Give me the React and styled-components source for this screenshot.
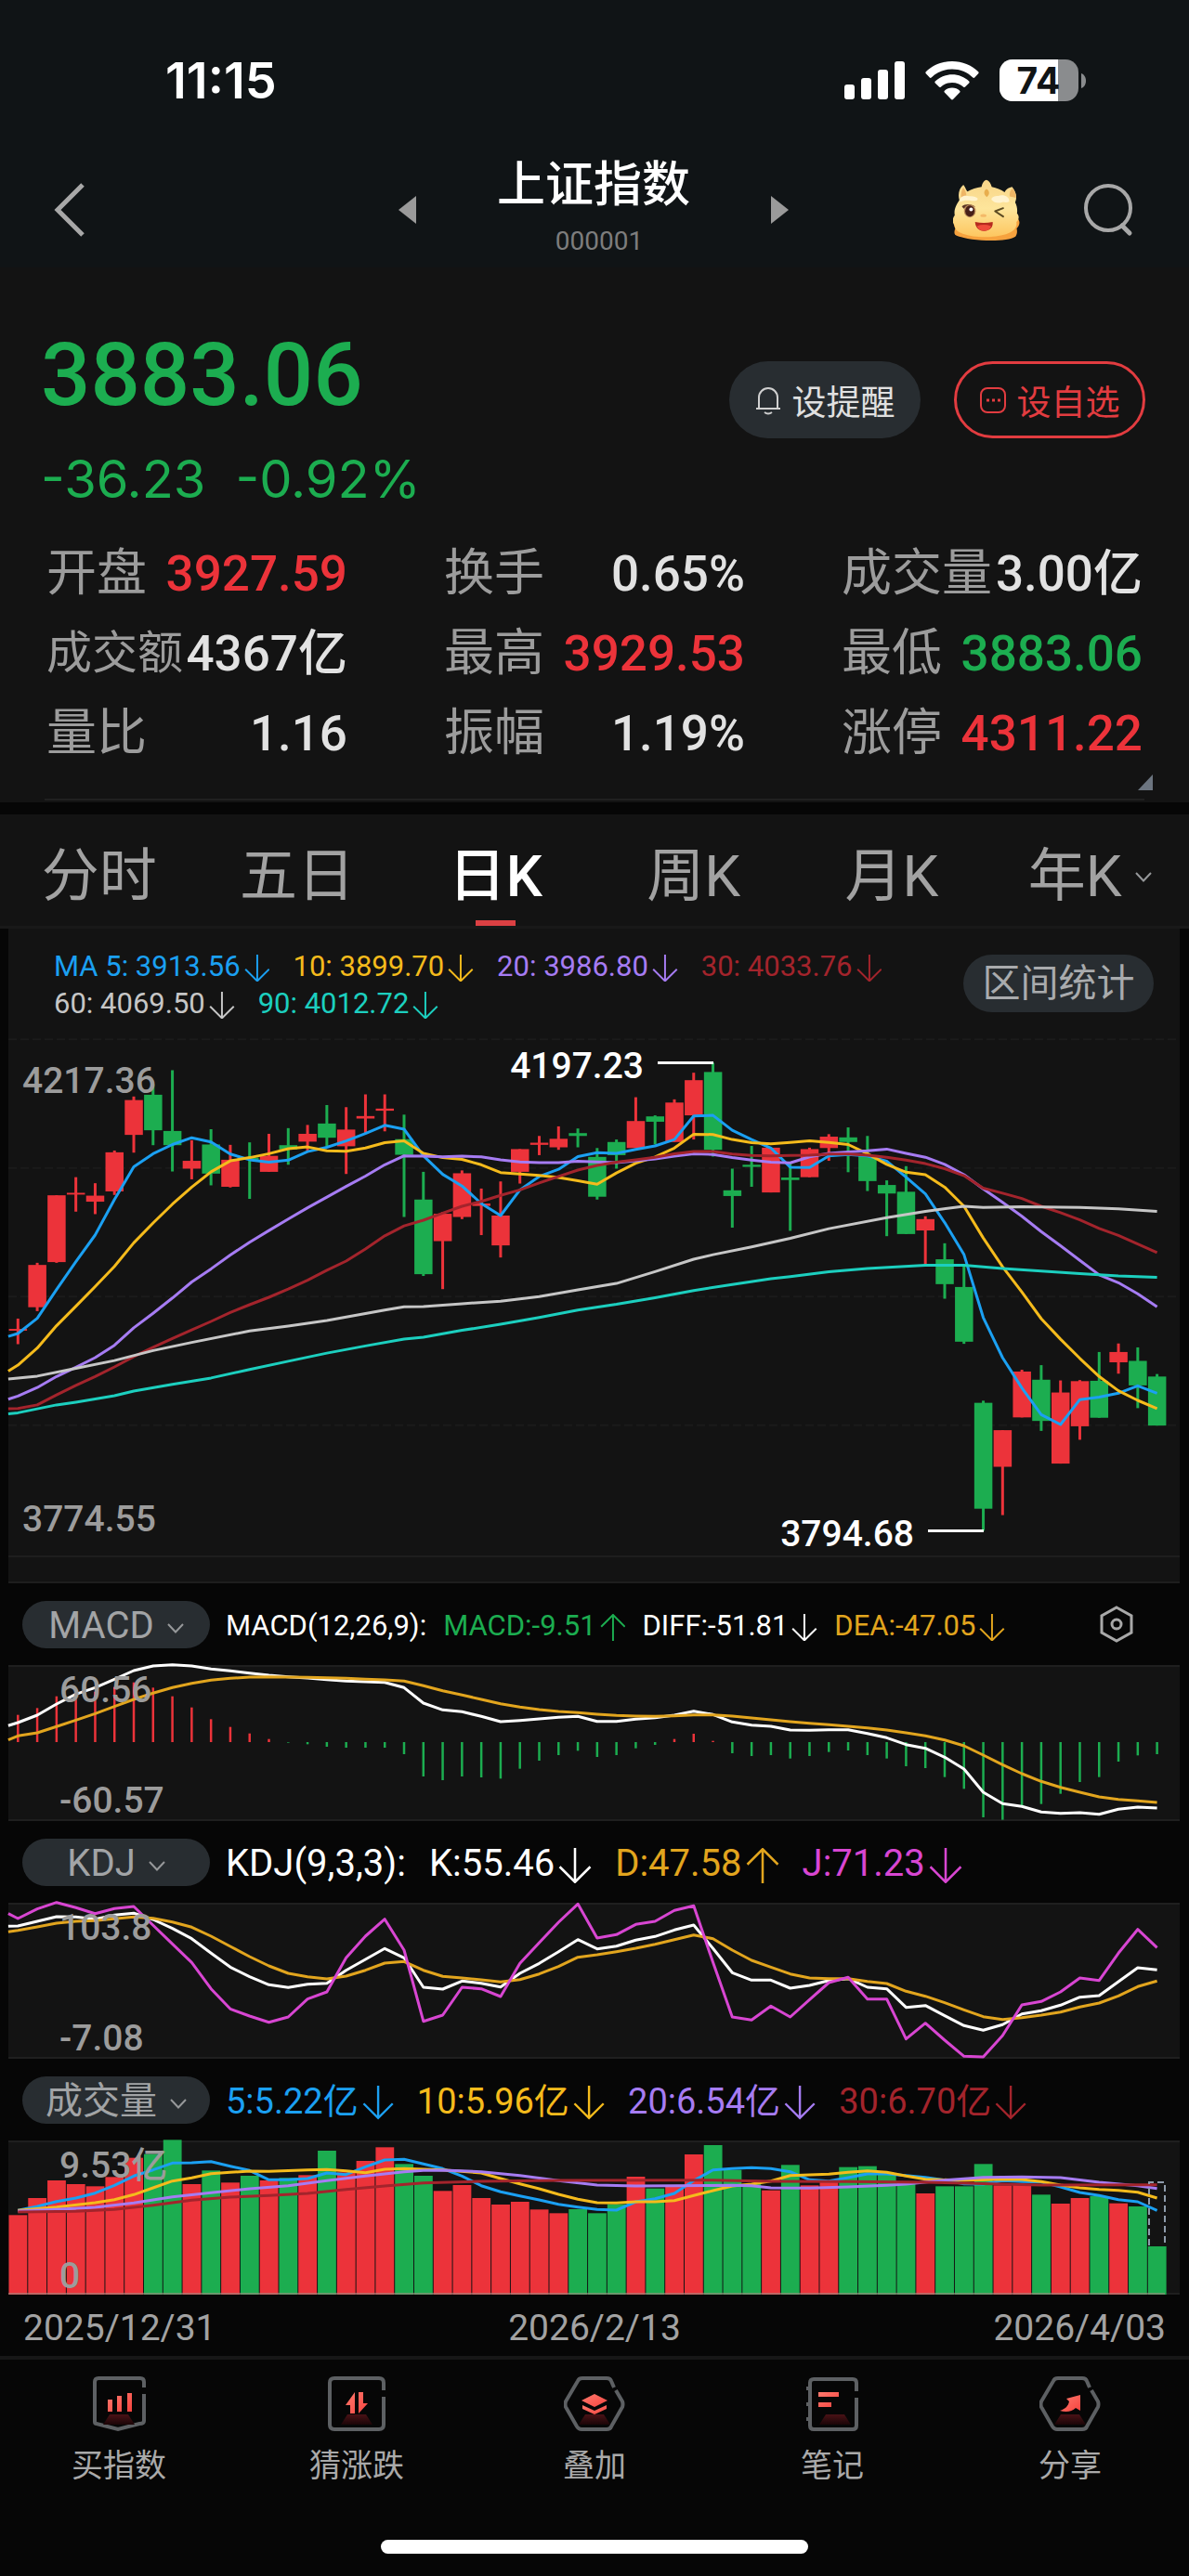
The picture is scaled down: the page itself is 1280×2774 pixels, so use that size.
import React from 'react';
import styled, { createGlobalStyle } from 'styled-components';

const RED = '#ec333a';
const GREEN = '#1cad50';
const WHITE = '#ffffff';
const BLUE = '#1ba0f2';
const YELLOW = '#f5bb1c';
const AMBER = '#e2a51e';
const PURPLE = '#a67cf3';
const CRIMSON = '#a3242c';
const SILVER = '#c6c6c6';
const TEAL = '#1ccfbf';
const PINK = '#d846d2';
const MUTED = '#a2a2a2';

const GlobalStyle = createGlobalStyle`
  * {
    box-sizing: border-box;
  }

  body {
    margin: 0;
    background: #060606;
    color: #e4e4e4;
    font-family: Roboto, 'Noto Sans CJK SC', sans-serif;
  }

  button, select {
    margin: 0;
    padding: 0;
    border: 0;
    background: none;
    color: inherit;
    font: inherit;
  }

  svg {
    display: block;
    flex: none;
  }
`;

const Top = styled.header`
  background: #101416;
  padding-bottom: 8px;
`;

const StatusBar = styled.div`
  display: flex;
  align-items: center;
  justify-content: space-between;
  height: 172px;
  padding: 2px 110px 0 178px;

  time {
    font-family: Inter, sans-serif;
    font-size: 54px;
    font-weight: 600;
    line-height: 56px;
    color: #fff;
  }

  div {
    display: flex;
    align-items: center;
    gap: 22px;
  }
`;

const NavBar = styled.nav`
  display: grid;
  grid-template-columns: 1fr auto 1fr;
  align-items: center;
  padding: 0 60px 0 58px;
`;

const NavSide = styled.div`
  display: flex;
  justify-content: ${({ end }) => (end ? 'flex-end' : 'flex-start')};
  align-items: center;
  gap: 68px;
`;

const Switcher = styled.div`
  display: flex;
  align-items: center;
  justify-content: space-between;
  width: 420px;
  text-align: center;

  h1 {
    margin: 0 0 12px;
    font-size: 52px;
    font-weight: 500;
    line-height: 56px;
    color: #fff;
  }

  p {
    margin: 0;
    padding-left: 12px;
    font-size: 28px;
    line-height: 40px;
    color: #7d7d7d;
  }
`;

const Quote = styled.section`
  background: #131313;
  padding: 68px 48px 2px;
`;

const QuoteHead = styled.div`
  display: flex;
  justify-content: space-between;
  align-items: flex-start;
  margin-left: -4px;
`;

const Price = styled.div`
  font-size: 94px;
  font-weight: 500;
  line-height: 96px;
  color: ${GREEN};
`;

const Change = styled.div`
  display: flex;
  gap: 32px;
  margin-top: 32px;
  font-family: Inter, sans-serif;
  font-size: 56px;
  line-height: 64px;
  color: ${GREEN};
`;

const Actions = styled.div`
  display: flex;
  gap: 36px;
  margin: 33px -1px 0 0;
`;

const Action = styled.button`
  display: flex;
  align-items: center;
  justify-content: center;
  gap: 12px;
  width: 206px;
  height: 83px;
  border-radius: 42px;
  font-size: 37px;
  background: ${({ outline }) => (outline ? 'none' : '#282d31')};
  border: ${({ outline }) => (outline ? '3px solid #e23c40' : '0')};
  color: ${({ outline }) => (outline ? '#e23c40' : '#e0e0e0')};
`;

const Stats = styled.dl`
  display: grid;
  grid-template-columns: repeat(3, 1fr);
  column-gap: 104px;
  margin: 27px 2px 0;
`;

const Stat = styled.div`
  display: flex;
  justify-content: space-between;
  align-items: center;
  height: 86px;
  line-height: 64px;
  white-space: nowrap;

  dt {
    font-size: ${({ tight }) => (tight ? 49 : 54)}px;
    font-weight: 400;
    color: #9c9c9c;
  }

  dd {
    margin: 0;
    font-size: 53px;
    font-weight: 500;
    color: ${({ tone }) => tone || '#e2e2e2'};
  }
`;

const QuoteFoot = styled.div`
  display: flex;
  justify-content: flex-end;
  height: 29px;
  padding-top: 1px;
  border-bottom: 2px solid #202020;

  svg {
    margin-right: -9px;
  }
`;

const Tabs = styled.div`
  display: grid;
  grid-template-columns: repeat(6, 1fr);
  height: 123px;
  margin-top: 13px;
  background: #131313;
  border-bottom: 3px solid #191919;
`;

const Tab = styled.button`
  display: flex;
  flex-direction: column;
  align-items: center;
  font-size: 62px;
  font-weight: ${({ active }) => (active ? 500 : 400)};
  color: ${({ active }) => (active ? '#fff' : MUTED)};

  span {
    display: flex;
    align-items: center;
    gap: 14px;
    height: 114px;
    padding-top: 8px;
  }

  svg {
    margin-top: 12px;
  }

  &::after {
    content: '';
    width: 43px;
    height: 6px;
    background: ${({ active }) => (active ? '#dc4043' : 'none')};
  }
`;

const Panel = styled.section`
  margin: 0 10px 0 9px;
  background: #131313;

  & > svg {
    width: 100%;
    height: auto;
    overflow: visible;
  }
`;

const PanelHead = styled.div`
  display: flex;
  justify-content: space-between;
  padding: 21px 28px 9px 49px;
`;

const MaLegend = styled.div`
  width: 920px;
  display: flex;
  flex-wrap: wrap;
  column-gap: 25px;
  font-size: 31px;
  line-height: 40px;
`;

const RangeButton = styled.button`
  width: 205px;
  height: 62px;
  margin-top: 7px;
  border-radius: 31px;
  background: #282d31;
  font-size: 41px;
  line-height: 56px;
  color: #a9abad;
`;

const IndicatorHead = styled.div`
  display: flex;
  align-items: center;
  height: 88px;
  padding: 0 60px 0 24px;

  & > svg {
    margin-left: auto;
  }
`;

const Picker = styled.label`
  display: flex;
  align-items: center;
  justify-content: center;
  gap: 14px;
  width: 202px;
  height: 51px;
  margin-right: 17px;
  border-radius: 26px;
  background: #282d31;

  select {
    appearance: none;
    field-sizing: content;
    padding-top: 3px;
    font-size: 40px;
    line-height: 48px;
    color: #a2a4a6;
  }

  svg {
    margin-top: 8px;
  }
`;

const IndicatorLegend = styled.div`
  display: flex;
  gap: ${({ size }) => (size < 35 ? 18 : 25)}px;
  padding-top: 4px;
  font-size: ${({ size }) => size}px;
  line-height: 50px;
  white-space: nowrap;
`;

const Value = styled.span`
  display: flex;
  align-items: center;
  gap: 4px;
  color: ${({ tone }) => tone};

  svg {
    width: 0.9em;
    height: 0.95em;
    margin-top: 3px;
  }
`;

const Dates = styled.div`
  display: grid;
  grid-template-columns: 1fr auto 1fr;
  height: 66px;
  padding: 6px 25px 0;
  font-size: 39px;
  line-height: 60px;
  color: ${MUTED};

  span:last-child {
    text-align: right;
  }
`;

const ToolBar = styled.footer`
  border-top: 4px solid #171717;
  padding: 18px 0 24px;
`;

const Tools = styled.div`
  display: grid;
  grid-template-columns: repeat(5, 1fr);
`;

const Tool = styled.button`
  display: flex;
  flex-direction: column;
  align-items: center;
  gap: 16px;
  font-size: 34px;
  line-height: 40px;
  color: #a9a9a9;
`;

const HomeBar = styled.div`
  width: 36%;
  height: 15px;
  margin: 60px auto 0;
  border-radius: 8px;
  background: #fff;
`;

const ChartLabel = styled.text`
  font-size: 39px;
  font-weight: 500;
  fill: ${({ tone }) => tone || '#9c9c9c'};
`;

const stats = [
  { label: '开盘', value: '3927.59', tone: RED },
  { label: '换手', value: '0.65%' },
  { label: '成交量', value: '3.00亿' },
  { label: '成交额', value: '4367亿', tight: true },
  { label: '最高', value: '3929.53', tone: RED },
  { label: '最低', value: '3883.06', tone: GREEN },
  { label: '量比', value: '1.16' },
  { label: '振幅', value: '1.19%' },
  { label: '涨停', value: '4311.22', tone: RED },
];

const tabs = ['分时', '五日', '日K', '周K', '月K', '年K'];

const maValues = [
  ['MA 5: 3913.56', BLUE, 'down'],
  ['10: 3899.70', YELLOW, 'down'],
  ['20: 3986.80', PURPLE, 'down'],
  ['30: 4033.76', CRIMSON, 'down'],
  ['60: 4069.50', SILVER, 'down'],
  ['90: 4012.72', TEAL, 'down'],
];

const macdValues = [
  ['MACD(12,26,9):', WHITE],
  ['MACD:-9.51', GREEN, 'up'],
  ['DIFF:-51.81', WHITE, 'down'],
  ['DEA:-47.05', AMBER, 'down'],
];

const kdjValues = [
  ['KDJ(9,3,3):', WHITE],
  ['K:55.46', WHITE, 'down'],
  ['D:47.58', AMBER, 'up'],
  ['J:71.23', PINK, 'down'],
];

const volumeValues = [
  ['5:5.22亿', BLUE, 'down'],
  ['10:5.96亿', YELLOW, 'down'],
  ['20:6.54亿', PURPLE, 'down'],
  ['30:6.70亿', CRIMSON, 'down'],
];

// body top, body bottom, high, low, up/down
const candles = [
  [839, 844, 810, 882, 1], [659, 778, 653, 789, 1], [463, 651, 463, 653, 1], [456, 461, 412, 509, 1],
  [464, 481, 429, 516, 1], [342, 452, 337, 462, 1], [195, 293, 185, 343, 1], [180, 280, 150, 322, 0],
  [282, 322, 111, 396, 0], [366, 388, 308, 418, 1], [320, 402, 277, 435, 0], [363, 439, 321, 441, 1],
  [357, 363, 314, 473, 0], [352, 397, 290, 397, 1], [322, 334, 274, 377, 0], [290, 312, 265, 338, 1],
  [261, 301, 209, 326, 0], [278, 325, 215, 403, 1], [240, 247, 179, 290, 1], [219, 225, 179, 283, 1],
  [305, 349, 236, 524, 0], [475, 685, 397, 690, 0], [515, 592, 510, 727, 1], [401, 524, 393, 530, 1],
  [486, 493, 444, 575, 1], [520, 604, 424, 638, 1], [333, 397, 333, 430, 1], [315, 321, 296, 350, 1],
  [304, 328, 269, 335, 1], [288, 296, 275, 328, 0], [355, 467, 330, 475, 0], [313, 350, 306, 388, 0],
  [254, 330, 187, 330, 1], [241, 256, 238, 320, 0], [202, 313, 193, 313, 1], [139, 238, 118, 306, 1],
  [116, 335, 90, 354, 0], [449, 465, 388, 554, 0], [377, 383, 324, 439, 0], [329, 455, 329, 455, 1],
  [413, 420, 372, 563, 0], [333, 412, 329, 412, 1], [298, 330, 291, 366, 1], [300, 313, 272, 398, 0],
  [350, 423, 296, 451, 0], [434, 458, 421, 578, 0], [453, 572, 381, 572, 0], [530, 562, 522, 658, 1],
  [643, 713, 598, 754, 0], [721, 875, 660, 881, 0], [1047, 1345, 1041, 1407, 0], [1124, 1227, 1124, 1363, 1],
  [959, 1088, 954, 1088, 1], [982, 1098, 941, 1126, 0], [1018, 1218, 984, 1218, 1], [986, 1113, 983, 1151, 1],
  [985, 1089, 904, 1089, 0], [904, 933, 880, 965, 1], [929, 998, 891, 1062, 0], [973, 1111, 966, 1111, 0],
];

const ma5 = [852, 809, 728, 650, 575, 475, 383, 346, 320, 301, 313, 347, 363, 370, 364, 340, 328, 310, 289, 266, 277, 352, 404, 437, 486, 520, 448, 410, 390, 354, 343, 345, 334, 324, 306, 240, 238, 280, 306, 330, 384, 385, 352, 348, 352, 367, 412, 459, 540, 630, 807, 920, 1005, 1080, 1108, 1038, 1031, 1020, 999, 1020];
const ma10 = [941, 893, 830, 775, 720, 663, 597, 541, 488, 440, 397, 366, 357, 346, 332, 327, 338, 339, 330, 315, 310, 345, 357, 362, 377, 399, 403, 407, 413, 422, 432, 400, 373, 355, 330, 291, 292, 306, 315, 318, 314, 310, 314, 320, 346, 376, 398, 405, 440, 494, 583, 664, 735, 810, 868, 922, 973, 1013, 1040, 1063];
const ma20 = [1028, 1004, 973, 947, 920, 885, 836, 795, 752, 707, 670, 631, 595, 562, 530, 498, 468, 438, 409, 377, 352, 353, 355, 353, 355, 363, 369, 371, 371, 367, 369, 371, 366, 361, 353, 346, 348, 357, 364, 370, 372, 355, 345, 341, 338, 333, 345, 356, 376, 405, 445, 483, 522, 565, 605, 646, 687, 709, 740, 777];
const ma30 = [1063, 1053, 1025, 998, 973, 946, 917, 891, 866, 842, 818, 793, 771, 750, 727, 702, 674, 648, 614, 577, 549, 533, 513, 494, 480, 463, 448, 428, 410, 392, 379, 370, 363, 356, 346, 340, 340, 347, 351, 352, 351, 350, 347, 347, 350, 356, 364, 374, 388, 408, 443, 457, 472, 494, 512, 532, 556, 576, 600, 624];
const ma60 = [[-0.5, 980], [0, 977], [1, 972], [3, 950], [5, 928], [7, 900], [9, 877], [12, 845], [14, 831], [16, 815], [19, 786], [20, 777], [21, 776], [23, 768], [25, 761], [27, 748], [29, 729], [31, 711], [33, 678], [35, 643], [36, 630], [38, 608], [40, 584], [42, 557], [45, 526], [47, 508], [49, 494], [50, 497], [52, 495], [55, 497], [57, 501], [59, 508]];
const ma90 = [[-0.5, 1078], [0, 1075], [2, 1053], [3, 1045], [5, 1027], [6, 1014], [8, 995], [10, 977], [12, 953], [14, 930], [16, 907], [18, 887], [20, 868], [21, 862], [23, 843], [25, 826], [27, 807], [29, 786], [31, 770], [33, 751], [35, 731], [37, 714], [39, 698], [40, 692], [42, 678], [44, 669], [47, 660], [49, 660], [51, 669], [53, 676], [55, 683], [57, 690], [59, 694]];

const macdBars = [440, 418, 380, 370, 365, 350, 335, 352, 380, 416, 454, 479, 500, 518, 530, 535, 543, 546, 546, 546, 567, 639, 651, 639, 642, 646, 614, 588, 570, 556, 576, 570, 548, 537, 518, 501, 524, 564, 573, 570, 581, 573, 560, 555, 570, 581, 606, 612, 641, 679, 771, 779, 736, 728, 695, 657, 641, 591, 571, 567];
const diff = [465, 441, 405, 373, 352, 325, 297, 282, 278, 282, 292, 298, 305, 312, 317, 321, 326, 331, 333, 335, 352, 402, 424, 430, 445, 462, 458, 453, 448, 445, 461, 461, 454, 449, 441, 428, 439, 463, 473, 477, 489, 490, 488, 488, 500, 514, 536, 548, 577, 615, 690, 727, 736, 754, 758, 756, 761, 745, 738, 741];
const dea = [508, 498, 478, 457, 436, 413, 390, 370, 352, 338, 328, 322, 318, 317, 318, 319, 320, 322, 325, 327, 331, 346, 362, 376, 390, 404, 415, 423, 429, 433, 438, 442, 444, 445, 443, 440, 440, 444, 450, 456, 462, 467, 472, 477, 482, 489, 498, 508, 521, 540, 570, 601, 630, 655, 674, 690, 705, 713, 718, 723];

const kLine = [312, 297, 282, 283, 290, 277, 271, 291, 320, 353, 400, 445, 476, 502, 511, 500, 497, 455, 420, 385, 415, 510, 516, 490, 497, 509, 465, 433, 395, 356, 386, 377, 358, 346, 325, 309, 385, 463, 487, 487, 513, 504, 488, 482, 510, 515, 575, 569, 602, 634, 649, 631, 596, 586, 568, 542, 537, 492, 447, 454];
const dLine = [326, 315, 303, 297, 295, 289, 283, 287, 299, 316, 345, 378, 411, 441, 465, 476, 483, 474, 455, 432, 427, 455, 475, 480, 486, 493, 485, 467, 443, 413, 405, 395, 384, 371, 356, 341, 353, 390, 423, 445, 467, 480, 482, 482, 491, 498, 523, 539, 560, 583, 605, 614, 608, 600, 590, 574, 561, 538, 508, 490];
const jLine = [288, 257, 236, 253, 272, 256, 249, 310, 370, 430, 515, 580, 603, 623, 606, 548, 525, 415, 345, 290, 390, 620, 600, 510, 515, 540, 433, 366, 300, 241, 351, 340, 307, 297, 262, 247, 430, 606, 616, 571, 606, 550, 495, 478, 548, 548, 677, 626, 681, 733, 735, 666, 567, 556, 525, 480, 488, 400, 323, 382];

const volumes = [496, 441, 384, 396, 403, 373, 311, 299, 253, 396, 352, 391, 369, 384, 376, 367, 288, 358, 321, 277, 331, 369, 418, 399, 441, 462, 453, 478, 490, 477, 490, 461, 372, 410, 403, 300, 270, 350, 395, 416, 334, 400, 390, 341, 338, 366, 395, 426, 403, 403, 331, 400, 397, 430, 459, 441, 435, 458, 468, 597];
const volumeUp = '111111100101010101110011111110001011000101100001000110110100';
const vol5 = [481, 468, 452, 441, 425, 400, 370, 350, 328, 327, 323, 338, 352, 382, 382, 378, 360, 365, 340, 318, 316, 331, 346, 370, 401, 421, 434, 447, 461, 470, 478, 480, 453, 443, 426, 385, 350, 346, 343, 346, 356, 382, 386, 375, 363, 363, 368, 374, 383, 395, 396, 385, 388, 389, 405, 423, 433, 446, 453, 481];
const vol10 = [[0, 481], [2, 470], [4, 456], [5, 446], [6, 430], [7, 408], [8, 386], [9, 376], [10, 362], [11, 358], [12, 354], [13, 355], [15, 350], [16, 349], [17, 353], [18, 359], [19, 348], [20, 346], [22, 350], [24, 360], [25, 378], [26, 395], [27, 411], [28, 429], [29, 445], [30, 456], [31, 457], [32, 453], [33, 453], [34, 449], [35, 433], [36, 417], [37, 402], [38, 396], [39, 386], [40, 368], [42, 364], [43, 358], [44, 353], [45, 358], [46, 370], [47, 380], [49, 384], [51, 380], [52, 381], [53, 388], [54, 399], [55, 408], [56, 413], [57, 416], [58, 422], [59, 441]];
const vol20 = [[0, 483], [2, 478], [4, 471], [6, 457], [8, 437], [10, 424], [12, 411], [14, 401], [16, 385], [18, 370], [20, 356], [21, 352], [22, 351], [24, 356], [26, 368], [28, 385], [30, 399], [32, 402], [37, 400], [38, 401], [39, 408], [41, 409], [43, 405], [45, 400], [46, 396], [48, 383], [50, 374], [52, 373], [54, 375], [56, 390], [58, 401], [59, 410]];
const vol30 = [[0, 486], [3, 484], [5, 478], [7, 464], [9, 448], [11, 438], [13, 433], [15, 426], [17, 413], [19, 402], [21, 392], [24, 387], [28, 384], [36, 383], [39, 387], [43, 388], [47, 390], [49, 393], [53, 399], [59, 398]];

const colX = (i) => 10.3 + i * 20.785;
const priceY = (v) => v / 2.6133;
const subY = (top) => (v) => (v - top) / 3;
const macdY = subY(279);
const kdjY = subY(237);
const volY = subY(255);

const Line = ({ data, y, tone, start, width = 3 }) => {
  const points = data.map((d, i) => (Array.isArray(d) ? d : [i, d]));
  if (start) points.unshift([-0.5, start]);
  return (
    <polyline
      fill="none"
      stroke={tone}
      strokeWidth={width}
      strokeLinejoin="round"
      points={points.map(([i, v]) => `${colX(i).toFixed(1)},${y(v).toFixed(1)}`).join(' ')}
    />
  );
};

const Chevron = () => (
  <svg width="18" height="11" viewBox="0 0 18 11" fill="none" stroke="#96989a" strokeWidth="2">
    <path d="M1 1l8 8.500l8-8.500" />
  </svg>
);

const Arrow = ({ up }) => (
  <svg viewBox="0 0 28 30" fill="none" stroke="currentColor" strokeWidth="2">
    <path d={up ? 'M14 30V1M1 14L14 1l13 13' : 'M14 0v29M1 16l13 13 13-13'} />
  </svg>
);

const Reading = ({ item: [text, tone, trend] }) => (
  <Value tone={tone}>
    {text}
    {trend && <Arrow up={trend === 'up'} />}
  </Value>
);

const CandleChart = () => (
  <svg width="1261" height="595" viewBox="0 0 1261 595">
    {[24, 386, 748, 1110].map((v) => (
      <line key={v} x1="0" x2="1261" y1={priceY(v)} y2={priceY(v)} stroke="#1b1b1b" strokeWidth="2" strokeDasharray="9 4" />
    ))}
    <path d="M0 566H1261M0 594H1261" stroke="#1e1e1e" strokeWidth="2" />
    {candles.map(([top, bottom, high, low, up], i) => (
      <g key={i} fill={up ? RED : GREEN}>
        <rect x={colX(i) - 1.5} y={priceY(high)} width="3" height={priceY(low - high)} />
        <rect x={colX(i) - 9.7} y={priceY(top)} width="19.5" height={priceY(bottom - top)} />
      </g>
    ))}
    <Line data={ma5} y={priceY} tone={BLUE} start={860} />
    <Line data={ma10} y={priceY} tone={YELLOW} start={958} />
    <Line data={ma20} y={priceY} tone={PURPLE} start={1037} />
    <Line data={ma30} y={priceY} tone={CRIMSON} start={1064} />
    <Line data={ma60} y={priceY} tone={SILVER} />
    <Line data={ma90} y={priceY} tone={TEAL} />
    <path d="M699 34.500H759M990 538.500H1050" stroke="#fff" strokeWidth="3" />
    <ChartLabel x="15" y="67">4217.36</ChartLabel>
    <ChartLabel x="15" y="539">3774.55</ChartLabel>
    <ChartLabel x="684" y="51" textAnchor="end" tone={WHITE}>4197.23</ChartLabel>
    <ChartLabel x="975" y="555" textAnchor="end" tone={WHITE}>3794.68</ChartLabel>
  </svg>
);

const Frame = ({ height, children }) => (
  <svg width="1261" height={height} viewBox={`0 0 1261 ${height}`}>
    <path d={`M0 1H1261M0 ${height - 1}H1261`} stroke="#1f1f1f" strokeWidth="2" />
    {children}
  </svg>
);

const MacdChart = () => (
  <Frame height={168}>
    {macdBars.map((v, i) => (
      <line key={i} x1={colX(i)} x2={colX(i)} y1={macdY(528)} y2={macdY(v)} stroke={v < 528 ? RED : GREEN} strokeWidth="2.500" />
    ))}
    <Line data={diff} y={macdY} tone={WHITE} start={475} />
    <Line data={dea} y={macdY} tone={AMBER} start={521} />
    <ChartLabel x="55" y="40">60.56</ChartLabel>
    <ChartLabel x="55" y="159">-60.57</ChartLabel>
  </Frame>
);

const KdjChart = () => (
  <Frame height={168}>
    <Line data={kLine} y={kdjY} tone={WHITE} start={313} />
    <Line data={dLine} y={kdjY} tone={AMBER} start={331} />
    <Line data={jLine} y={kdjY} tone={PINK} start={272} />
    <ChartLabel x="55" y="40">103.8</ChartLabel>
    <ChartLabel x="55" y="159">-7.08</ChartLabel>
  </Frame>
);

const VolumeChart = () => (
  <Frame height={166}>
    {volumes.map((v, i) => (
      <rect key={i} x={colX(i) - 9.8} y={volY(v)} width="19.800" height={166 - volY(v)} fill={volumeUp[i] === '1' ? RED : GREEN} />
    ))}
    <Line data={vol5} y={volY} tone={BLUE} />
    <Line data={vol10} y={volY} tone={YELLOW} />
    <Line data={vol20} y={volY} tone={PURPLE} />
    <Line data={vol30} y={volY} tone={CRIMSON} />
    <path d="M1228 113V45H1245V113" fill="none" stroke="#8e9bab" strokeWidth="2" strokeDasharray="7 4" />
    <path d="M0 165H1245" stroke="#a08a80" strokeOpacity=".6" strokeWidth="2" />
    <ChartLabel x="55" y="40">9.53亿</ChartLabel>
    <ChartLabel x="55" y="159">0</ChartLabel>
  </Frame>
);

const Signal = () => (
  <svg width="65" height="42" viewBox="0 0 65 42" fill="#fff">
    <rect x="0" y="25" width="11" height="16" rx="3" />
    <rect x="18" y="18" width="11" height="23" rx="3" />
    <rect x="36" y="9" width="11" height="32" rx="3" />
    <rect x="54" y="0" width="11" height="41" rx="3" />
  </svg>
);

const Wifi = () => (
  <svg width="58" height="42" viewBox="0 0 58 42" fill="#fff">
    <path d="M29 0C18 0 8 4.200 .8 11.300c-.6.600-.6 1.400 0 2l4 4.200c.5.500 1.300.500 1.900 0C12.700 11.800 20.500 8.600 29 8.600s16.300 3.200 22.300 8.900c.6.500 1.400.500 1.900 0l4-4.200c.6-.6.6-1.400 0-2C50 4.200 40 0 29 0z" />
    <path d="M29 14.300c-7 0-13.400 2.700-18.200 7.200-.6.500-.6 1.400 0 1.900l4.100 4.200c.5.500 1.300.500 1.800.1C20 24.700 24.300 22.900 29 22.900s9 1.800 12.300 4.800c.5.400 1.300.400 1.800-.1l4.100-4.200c.6-.5.6-1.400 0-1.900C42.400 17 36 14.300 29 14.300z" />
    <path d="M29 28.600c-3.200 0-6 1.200-8.200 3.100-.5.500-.5 1.300 0 1.800l7.200 7.500c.5.600 1.500.600 2 0l7.200-7.500c.5-.5.5-1.300 0-1.800C35 29.800 32.200 28.600 29 28.600z" />
  </svg>
);

const Battery = () => (
  <svg width="94" height="46" viewBox="0 0 94 46">
    <clipPath id="battery">
      <rect width="85" height="45" rx="14" />
    </clipPath>
    <g clipPath="url(#battery)">
      <rect width="85" height="45" fill="#8a8c8e" />
      <rect width="63" height="45" fill="#fff" />
    </g>
    <path d="M88 15c3 1 5 4 5 8s-2 7-5 8z" fill="#8a8c8e" />
    <text x="42" y="37" textAnchor="middle" fontFamily="Inter, sans-serif" fontWeight="700" fontSize="39" fill="#101416">74</text>
  </svg>
);

const Dragon = () => (
  <svg width="72" height="67" viewBox="432 420 216 202">
    <defs>
      <linearGradient id="skin" x1="0" y1="0" x2="0" y2="1">
        <stop offset="0" stopColor="#f8d588" />
        <stop offset=".5" stopColor="#fde59b" />
        <stop offset="1" stopColor="#fdc65f" />
      </linearGradient>
    </defs>
    <path d="M436 560q-4 12 3 20-6 12-1 20c30 20 165 28 196 6 6-8 6-18 4-26 10-10 12-22 4-32z" fill="#f6a23e" />
    <path d="M452 488c-6-20 0-40 13-50 7 8 8 16 13 22 14-8 30-13 46-15 2-12 8-22 16-23 9 3 14 11 17 23 16 3 30 9 42 17 4-8 10-14 24-17 12 14 18 32 10 50 6 10 8 24 6 36 8 8 7 20-2 28 4 18-10 32-34 40-44 13-104 11-140-2-18-6-26-14-26-26-8-8-9-24 0-34-4-18 6-36 15-49z" fill="url(#skin)" />
    <path d="M458 482c-2-14 1-26 7-34 6 8 8 14 10 24zM636 480c0-14-5-24-12-30-7 6-10 14-9 26z" fill="#eeb566" />
    <path d="M540 452c-10 6-10 18 1 26 10-8 10-20-1-26z" fill="#e8ae4e" />
    <path d="M454 494c-4-18 14-24 30-19 14-1 22 2 28 8-2 8-12 8-20 7-14-2-26-2-38 4zM556 486c0-8 10-12 22-12 18-6 36 2 36 18-6 4-12 4-20 2-14 6-30 2-38-8z" fill="#fff3cf" />
    <path d="M460 508c10-8 30-10 44 2-12-4-30-4-38 6z" fill="#5b3525" />
    <ellipse cx="486" cy="523" rx="19" ry="21" fill="#b98857" />
    <ellipse cx="486" cy="523" rx="15" ry="18" fill="#471f18" />
    <circle cx="490" cy="518" r="6" fill="#fff" />
    <path d="M594 514l-26 10 26 17" fill="none" stroke="#5b4a22" strokeWidth="6" strokeLinecap="round" strokeLinejoin="round" />
    <ellipse cx="530" cy="538" rx="10" ry="5" fill="#f4b968" />
    <path d="M503 559q28 6 57 0c2 16-8 29-28 29-18 0-28-12-29-29z" fill="#b52a1e" />
    <path d="M509 572q22-8 46 0c-3 10-10 15-23 15-12 0-19-5-23-15z" fill="#ee4b3a" />
  </svg>
);

const Glow = ({ x = 32, y = 42 }) => (
  <path d={`M${x - 10} ${y}h20l7 11h-34z`} fill="url(#glow)" />
);

const BuyIcon = () => (
  <svg width="66" height="60" viewBox="0 0 66 60">
    <path d="M60 12V6q0-4-4-4H11q-4 0-4 4v43q0 2 2 2l23 6 23-6q5 0 5-3V19" fill="none" stroke="#5d6063" strokeWidth="4" />
    <path d="M21 25h5v13h-5zM31 21h5v17h-5zM42 18h5v20h-5z" fill="url(#hot)" />
    <Glow x={33} y={41} />
  </svg>
);

const GuessIcon = () => (
  <svg width="66" height="60" viewBox="0 0 66 60">
    <path d="M62 15V7q0-5-5-5H9Q4 2 4 7v45q0 5 5 5h48q5 0 5-5V22" fill="none" stroke="#5d6063" strokeWidth="4" />
    <Glow x={33} y={41} />
    <path d="M31 17v23h-5V31h-5zM35 17v23l10-11h-5V17z" fill="url(#hot)" />
  </svg>
);

const hexPath = 'M54 12l-3-7q-1-3-5-3H20q-4 0-5 3L2 27q-1 3 0 6l12 21q2 3 5 3h27q4 0 5-3l12-21q1-3 0-6l-7-12';

const StackIcon = () => (
  <svg width="66" height="60" viewBox="0 0 66 60">
    <path d={hexPath} fill="none" stroke="#5d6063" strokeWidth="4" />
    <Glow x={33} y={41} />
    <path d="M33 19l14 7-14 7-14-7z" fill="url(#hot)" />
    <path d="M20 31l13 6 13-6v4l-13 6-13-6z" fill="url(#hot)" />
  </svg>
);

const NoteIcon = () => (
  <svg width="66" height="60" viewBox="0 0 66 60">
    <path d="M59 16V7q0-4-4-4H13q-4 0-4 4v46q0 4 4 4h42q4 0 4-4V23M5 13h4M5 30h4M5 46h4" fill="none" stroke="#5d6063" strokeWidth="4" />
    <path d="M18 17h22v5H18zM18 28h14v5H18z" fill="url(#hot)" />
    <Glow x={36} y={41} />
  </svg>
);

const ShareIcon = () => (
  <svg width="66" height="60" viewBox="0 0 66 60">
    <path d={hexPath} fill="none" stroke="#5d6063" strokeWidth="4" />
    <Glow x={33} y={41} />
    <path d="M44 20v17l-5-3c-4 4-10 5-17 3 6-2 9-5 10-10l-3-3z" fill="url(#hot)" />
  </svg>
);

const tools = [
  ['买指数', BuyIcon],
  ['猜涨跌', GuessIcon],
  ['叠加', StackIcon],
  ['笔记', NoteIcon],
  ['分享', ShareIcon],
];

const Indicator = ({ name, label, values, size, children }) => (
  <IndicatorHead>
    <Picker>
      <select aria-label={label} defaultValue={name}>
        <option>{name}</option>
      </select>
      <Chevron />
    </Picker>
    <IndicatorLegend size={size}>
      {values.map((item) => <Reading key={item[0]} item={item} />)}
    </IndicatorLegend>
    {children}
  </IndicatorHead>
);

export default () => (
  <React.Fragment>
    <GlobalStyle />
    <Top>
      <StatusBar>
        <time>11:15</time>
        <div>
          <Signal />
          <Wifi />
          <Battery />
        </div>
      </StatusBar>
      <NavBar>
        <NavSide>
          <button type="button" aria-label="返回">
            <svg width="34" height="58" viewBox="0 0 34 58" fill="none" stroke="#a8a8a8" strokeWidth="5">
              <path d="M31 2L4 29l27 27" />
            </svg>
          </button>
        </NavSide>
        <Switcher>
          <button type="button" aria-label="上一个">
            <svg width="19" height="30" viewBox="0 0 19 30" fill="#9a9a9a"><path d="M0 15L19 0v30z" /></svg>
          </button>
          <div>
            <h1>上证指数</h1>
            <p>000001</p>
          </div>
          <button type="button" aria-label="下一个">
            <svg width="19" height="30" viewBox="0 0 19 30" fill="#9a9a9a"><path d="M19 15L0 0v30z" /></svg>
          </button>
        </Switcher>
        <NavSide end="true">
          <button type="button" aria-label="助手"><Dragon /></button>
          <button type="button" aria-label="搜索">
            <svg width="54" height="58" viewBox="0 0 54 58" fill="none" stroke="#a8a8a8" strokeWidth="4">
              <circle cx="27" cy="27" r="24" />
              <path d="M42 46l8 8" strokeWidth="5" strokeLinecap="round" />
            </svg>
          </button>
        </NavSide>
      </NavBar>
    </Top>
    <Quote>
      <QuoteHead>
        <div>
          <Price>3883.06</Price>
          <Change>
            <span>-36.23</span>
            <span>-0.92%</span>
          </Change>
        </div>
        <Actions>
          <Action type="button">
            <svg width="28" height="32" viewBox="0 0 28 32" fill="none" stroke="#d0d0d0" strokeWidth="2">
              <path d="M1 25h26M4 25V13a10 10 0 0120 0v12M10 29q4 3 8 0" />
            </svg>
            设提醒
          </Action>
          <Action type="button" outline="true">
            <svg width="28" height="28" viewBox="0 0 28 28" fill="none" stroke="#e23c40" strokeWidth="2">
              <rect x="1" y="1" width="26" height="26" rx="7" />
              <path d="M7 14h3M13 14h3M19 14h3" strokeWidth="3" />
            </svg>
            设自选
          </Action>
        </Actions>
      </QuoteHead>
      <Stats>
        {stats.map(({ label, value, tone, tight }) => (
          <Stat key={label} tone={tone} tight={tight ? 1 : undefined}>
            <dt>{label}</dt>
            <dd>{value}</dd>
          </Stat>
        ))}
      </Stats>
      <QuoteFoot>
        <svg width="16" height="17" viewBox="0 0 16 17" fill="#6c7580"><path d="M16 0v17H0z" /></svg>
      </QuoteFoot>
    </Quote>
    <Tabs>
      {tabs.map((name) => (
        <Tab key={name} type="button" active={name === '日K' ? 1 : undefined}>
          <span>
            {name}
            {name === '年K' && <Chevron />}
          </span>
        </Tab>
      ))}
    </Tabs>
    <Panel>
      <PanelHead>
        <MaLegend>
          {maValues.map((item) => <Reading key={item[0]} item={item} />)}
        </MaLegend>
        <RangeButton type="button">区间统计</RangeButton>
      </PanelHead>
      <CandleChart />
    </Panel>
    <Indicator name="MACD" label="指标一" size={31} values={macdValues}>
      <svg width="36" height="40" viewBox="0 0 36 40" fill="none" stroke="#a8a8a8" strokeWidth="3">
        <path d="M18 2l16 9v18l-16 9-16-9V11z" />
        <circle cx="18" cy="20" r="5" />
      </svg>
    </Indicator>
    <Panel><MacdChart /></Panel>
    <Indicator name="KDJ" label="指标二" size={40} values={kdjValues} />
    <Panel><KdjChart /></Panel>
    <Indicator name="成交量" label="指标三" size={38} values={volumeValues} />
    <Panel><VolumeChart /></Panel>
    <Dates>
      <span>2025/12/31</span>
      <span>2026/2/13</span>
      <span>2026/4/03</span>
    </Dates>
    <ToolBar>
      <svg width="0" height="0">
        <defs>
          <linearGradient id="hot" x1="0" y1="0" x2="1" y2="1">
            <stop offset="0" stopColor="#ff7a6e" />
            <stop offset="1" stopColor="#f5443f" />
          </linearGradient>
          <linearGradient id="glow" x1="0" y1="0" x2="0" y2="1">
            <stop offset="0" stopColor="#4a1216" />
            <stop offset="1" stopColor="#1a0507" />
          </linearGradient>
        </defs>
      </svg>
      <Tools>
        {tools.map(([name, Icon]) => (
          <Tool key={name} type="button">
            <Icon />
            {name}
          </Tool>
        ))}
      </Tools>
      <HomeBar />
    </ToolBar>
  </React.Fragment>
);
